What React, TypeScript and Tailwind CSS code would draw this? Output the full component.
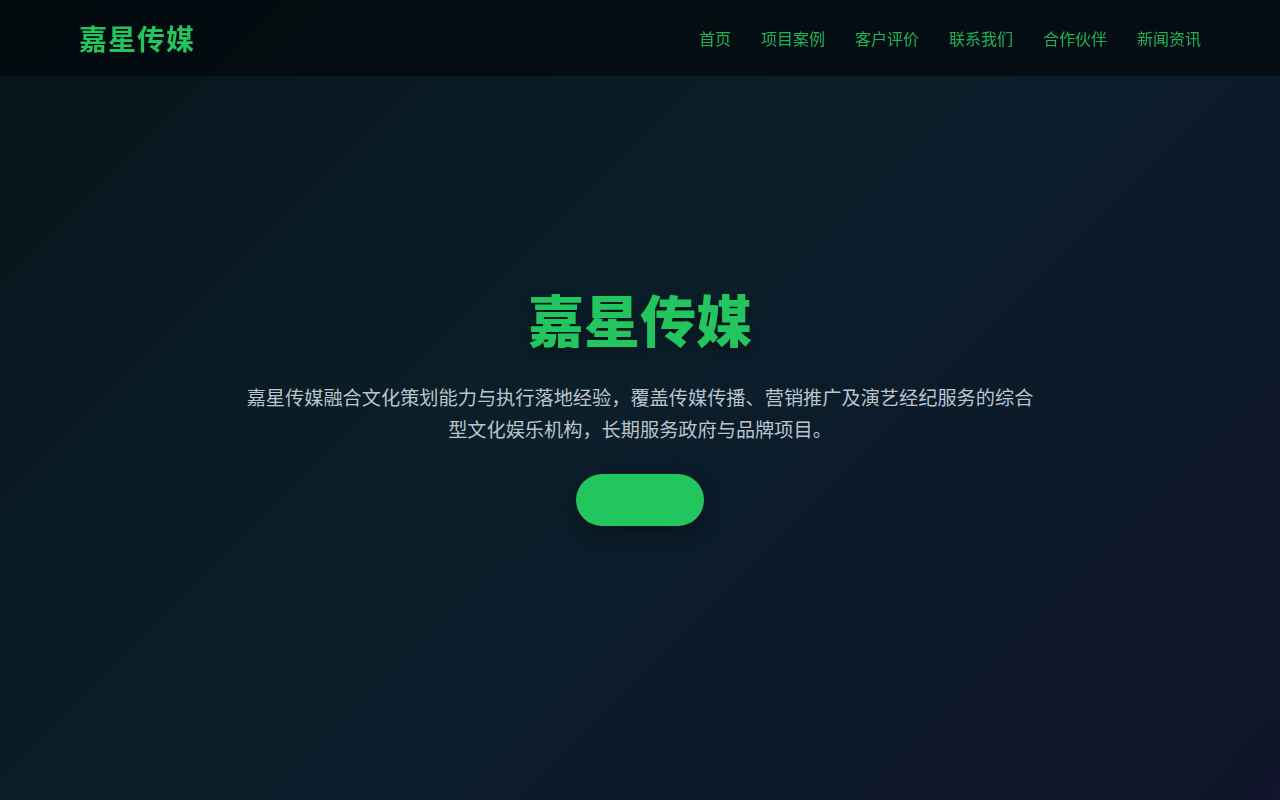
const navItems = ["首页", "项目案例", "客户评价", "联系我们", "合作伙伴", "新闻资讯"];

const font = "font-['Noto_Sans_CJK_SC','Noto_Sans',sans-serif]";

export default function App() {
  return (
    <div
      className={`relative min-h-screen bg-[linear-gradient(135deg,#06141a_0%,#0b1f2a_45%,#0c1a2a_70%,#11142a_100%)] ${font}`}
    >
      {/* Header overlays the hero */}
      <header className="fixed inset-x-0 top-0 z-10 h-[76px] bg-[#03080c]/75 px-[79px] flex items-center justify-between">
        <div className="text-[28px] font-bold text-[#22c55e] leading-none tracking-[1px]">
          嘉星传媒
        </div>
        <nav className="flex items-center gap-[30px]">
          {navItems.map((item) => (
            <a
              key={item}
              href="#"
              className="text-[16px] text-[#22c55e]/90 leading-none"
            >
              {item}
            </a>
          ))}
        </nav>
      </header>

      {/* Hero */}
      <main className="min-h-screen flex flex-col items-center justify-center text-center px-6 pt-[10px]">
        <h1 className="text-[56px] font-black leading-[1.2] text-[#22c55e] [text-shadow:0_4px_12px_rgba(0,0,0,0.35)]">
          嘉星传媒
        </h1>
        <p className="mt-[30px] max-w-[800px] text-[19.2px] leading-[32px] text-[#bcc4cc]">
          嘉星传媒融合文化策划能力与执行落地经验，覆盖传媒传播、营销推广及演艺经纪服务的综合型文化娱乐机构，长期服务政府与品牌项目。
        </p>
        <button
          type="button"
          className="mt-[29px] w-[128px] h-[52px] rounded-full bg-[#22c55e] shadow-[0_6px_20px_rgba(0,0,0,0.35)]"
        />
      </main>
    </div>
  );
}
